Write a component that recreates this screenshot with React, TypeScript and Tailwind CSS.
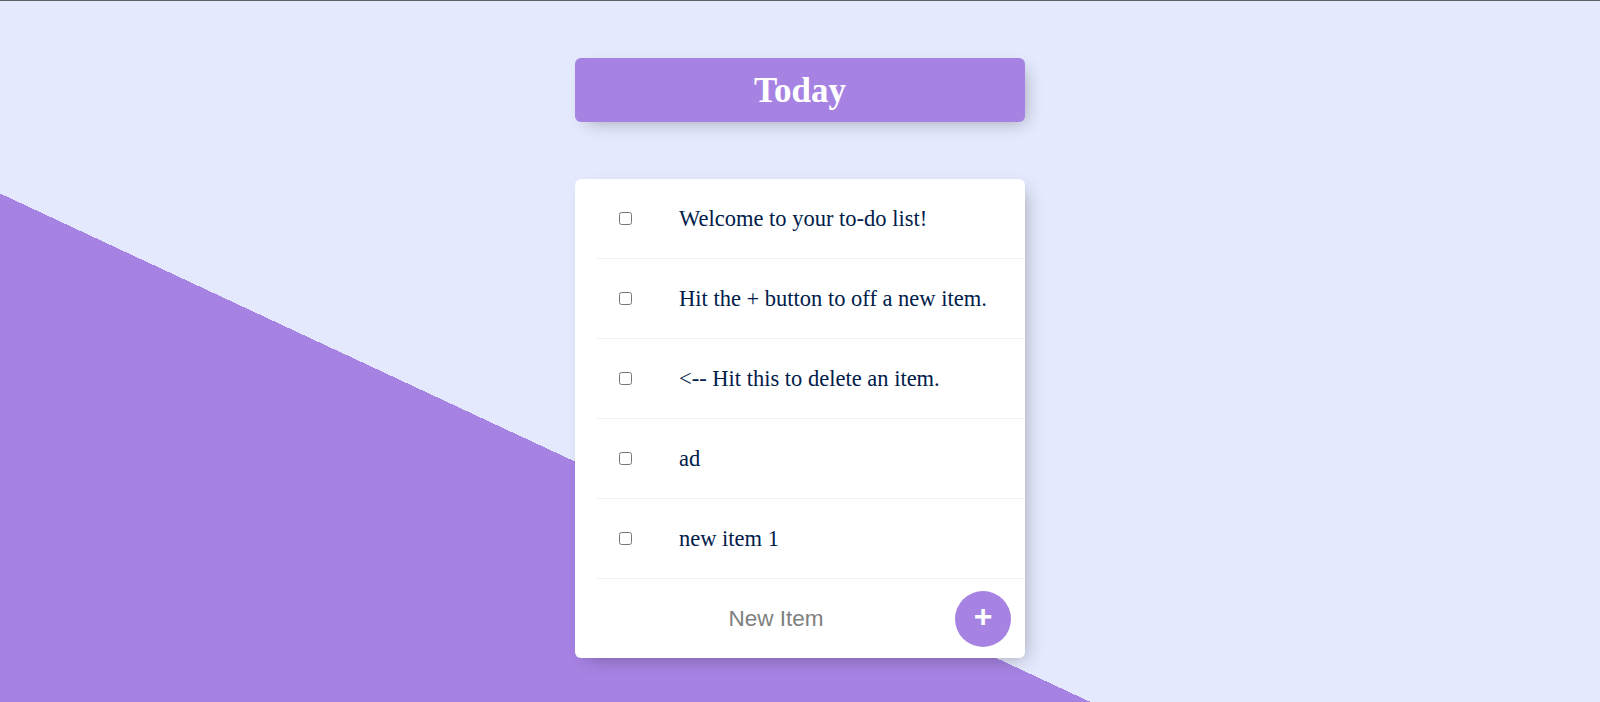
const items = [
  "Welcome to your to-do list!",
  "Hit the + button to off a new item.",
  "<-- Hit this to delete an item.",
  "ad",
  "new item 1",
];

export default function App() {
  return (
    <div className="w-full h-[702px] overflow-hidden border-t border-[#5f6166] bg-[#e4e9fd] bg-[linear-gradient(25deg,#a683e3_50%,#e4e9fd_50%)] bg-size-[100%_1131px] bg-no-repeat flex flex-col items-center font-['Liberation_Serif',serif]">
      <div className="mt-[57px] w-[450px] h-[64px] rounded-[6px] bg-[#a683e3] shadow-[6px_6px_17px_-6px_rgba(0,0,0,0.3)] flex items-center justify-center">
        <h1 className="text-white font-bold text-[35px] leading-none">Today</h1>
      </div>

      <div className="mt-[57px] w-[450px] bg-white rounded-[6px] shadow-[6px_6px_17px_-6px_rgba(0,0,0,0.3)] flex flex-col">
        {items.map((item) => (
          <div key={item} className="ml-[22px] h-[80px] border-b border-[#f1f1f1] flex items-center">
            <input type="checkbox" className="ml-[22px] w-[13px] h-[13px]" />
            <p className="ml-[47px] text-[22.5px] text-[#00204a]">{item}</p>
          </div>
        ))}
        <div className="ml-[22px] h-[79px] flex items-center">
          <input
            type="text"
            placeholder="New Item"
            className="w-[358px] h-[67px] text-center bg-transparent outline-none text-[22.5px] font-['Liberation_Sans',sans-serif] placeholder:text-[#808080]"
          />
          <button className="w-[56px] h-[56px] rounded-full bg-[#a683e3] text-white text-[32px] font-bold leading-none pb-[5px] font-['Liberation_Sans',sans-serif] flex items-center justify-center">
            +
          </button>
        </div>
      </div>
    </div>
  );
}
